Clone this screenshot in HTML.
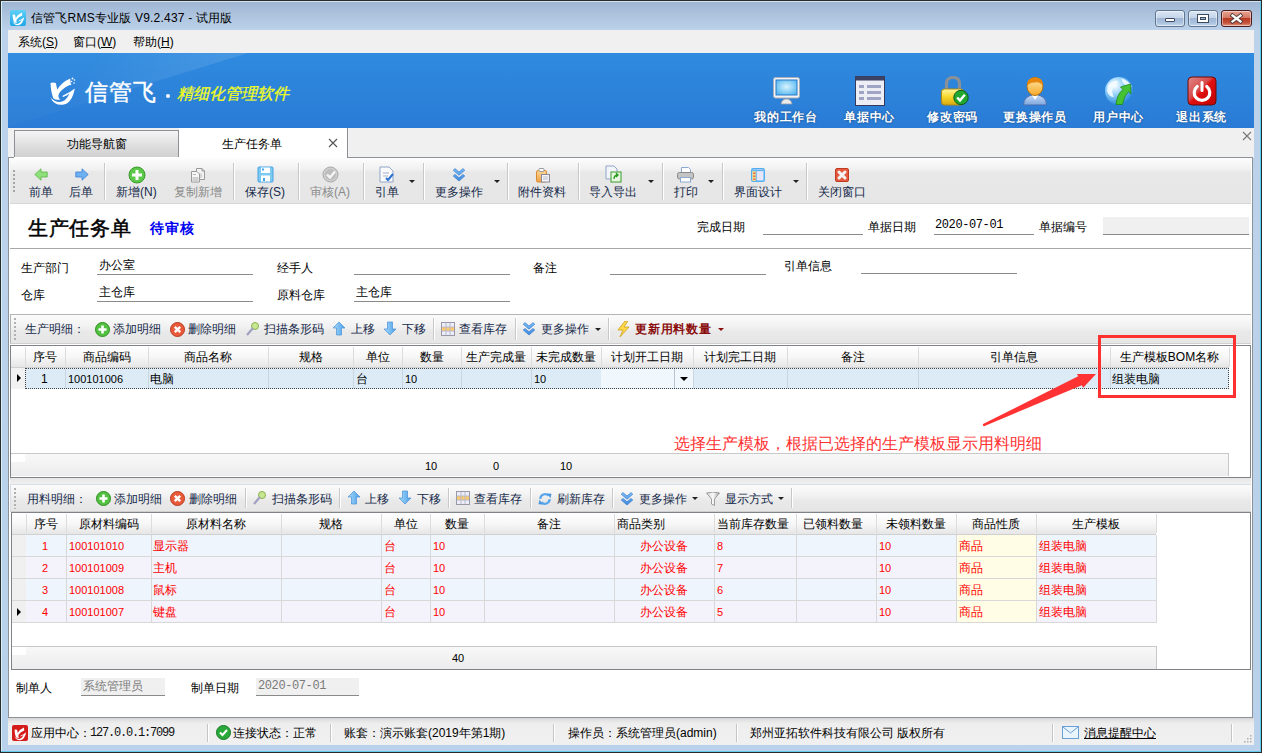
<!DOCTYPE html>
<html><head><meta charset="utf-8"><style>
*{margin:0;padding:0;box-sizing:border-box}
html,body{width:1262px;height:753px;overflow:hidden}
body{position:relative;font-family:"Liberation Sans",sans-serif;font-size:12px;color:#000;
background:linear-gradient(#9db4d2 0px,#bcd2ea 30px,#b9d1ea 100%)}
.a{position:absolute;white-space:nowrap;line-height:12px}
.tb{color:#15294a}
.gr{color:#8a8a8a}
.dd{position:absolute;width:0;height:0;border-left:3px solid transparent;border-right:3px solid transparent;border-top:3px solid #222}
.m{font-family:"Liberation Mono",monospace}
.sep{position:absolute;width:1px;background:#c8c8c8;box-shadow:1px 0 0 #fff}
</style></head><body>
<div class="a" style="left:0px;top:0px;width:1262px;height:753px;border:1px solid #2a2a2a;"></div>
<div class="a" style="left:1px;top:1px;width:1260px;height:751px;border:1px solid #5ccbf0;border-top-color:#d5e3f0;border-left-color:#d4f2fc"></div>
<div class="a" style="left:1px;top:751px;width:1260px;height:1px;background:#63c9ef"></div>
<svg class="a" style="left:10px;top:10px" width="16" height="16"><defs><linearGradient id="tg" x1="0" y1="0" x2="0" y2="1"><stop offset="0" stop-color="#5fd0f6"/><stop offset="1" stop-color="#1ea6e8"/></linearGradient></defs><rect width="16" height="16" rx="2" fill="url(#tg)"/><g transform="translate(-0.6,-0.5) scale(0.48)"><path d="M6.5 11 Q9 10.2 11.8 11 Q12.6 14.5 13.2 17.5 Q18 10 26.2 6.5 L26.8 12.5 Q19 15.5 15 21.5 Q13.2 25.5 16.5 27.5 Q12 28.5 9.5 26.5 Q7 21 6.5 11 Z" fill="#fff"/><path d="M6.3 25.2 Q10 33.5 18.5 32.8 Q28 31.5 30.8 16.4 Q25 21 20 23 Q17.5 24.3 19 25 Q23 23.5 25.5 21.5 Q22 29.5 16 30 Q10 30 6.3 25.2Z" fill="#fff"/></g></svg>
<div class="a" style="left:31px;top:12px;font-size:12px;color:#000;letter-spacing:0.2px">信管飞RMS专业版 V9.2.437 - 试用版</div>
<div class="a" style="left:1155px;top:10px;width:30px;height:17px;background:linear-gradient(#dbe6f3 0,#c4d5ea 45%,#9fb7d5 50%,#abc3df 80%,#c9dcf0 100%);border:1px solid #5f7590;border-radius:3px;box-shadow:inset 0 0 0 1px rgba(255,255,255,.45)"></div>
<div class="a" style="left:1188px;top:10px;width:30px;height:17px;background:linear-gradient(#dbe6f3 0,#c4d5ea 45%,#9fb7d5 50%,#abc3df 80%,#c9dcf0 100%);border:1px solid #5f7590;border-radius:3px;box-shadow:inset 0 0 0 1px rgba(255,255,255,.45)"></div>
<div class="a" style="left:1221px;top:10px;width:31px;height:17px;background:linear-gradient(#e8a493 0,#d47a66 45%,#b93a22 50%,#c5543c 80%,#e09a86 100%);border:1px solid #4b1c1c;border-radius:3px;box-shadow:inset 0 0 0 1px rgba(255,255,255,.45)"></div>
<div class="a" style="left:1165px;top:18px;width:10px;height:4px;background:#fff;border:1px solid #3b4a5c;border-radius:1px"></div>
<div class="a" style="left:1197px;top:14px;width:12px;height:9px;border:1px solid #3b4a5c;background:transparent;box-shadow:inset 0 0 0 2px #fff, inset 0 0 0 3px #3b4a5c"></div>
<svg class="a" style="left:1229px;top:12px" width="16" height="13"><path d="M3.5 3.5 L11.5 9.5 M11.5 3.5 L3.5 9.5" stroke="#4a3838" stroke-width="4" stroke-linecap="square"/><path d="M3.5 3.5 L11.5 9.5 M11.5 3.5 L3.5 9.5" stroke="#fafafa" stroke-width="2.3" stroke-linecap="square"/></svg>
<div class="a" style="left:8px;top:30px;width:1246px;height:23px;background:#f0f0f0"></div>
<div class="a" style="left:18px;top:36px;">系统(<u>S</u>)</div>
<div class="a" style="left:73px;top:36px;">窗口(<u>W</u>)</div>
<div class="a" style="left:133px;top:36px;">帮助(<u>H</u>)</div>
<div class="a" style="left:8px;top:53px;width:1246px;height:75px;overflow:hidden;background:linear-gradient(#2f8bdf,#2a7bd5)"><div style="position:absolute;left:0;top:0;width:260px;height:74px;clip-path:polygon(0 0,240px 0,0 74px);background:linear-gradient(120deg,rgba(255,255,255,0.02) 30%,rgba(255,255,255,0.16) 100%)"></div></div>
<svg class="a" style="left:44px;top:72px" width="40" height="36"><path d="M6.5 11 Q9 10.2 11.8 11 Q12.6 14.5 13.2 17.5 Q18 10 26.2 6.5 L26.8 12.5 Q19 15.5 15 21.5 Q13.2 25.5 16.5 27.5 Q12 28.5 9.5 26.5 Q7 21 6.5 11 Z" fill="#fff"/><path d="M6.3 25.2 Q10 33.5 18.5 32.8 Q28 31.5 30.8 16.4 Q25 21 20 23 Q17.5 24.3 19 25 Q23 23.5 25.5 21.5 Q22 29.5 16 30 Q10 30 6.3 25.2Z" fill="#fff"/><g fill="#fff"><circle cx="28.5" cy="6.5" r="0.9"/><circle cx="30.5" cy="8" r="0.8"/><circle cx="27.5" cy="9.5" r="0.8"/><circle cx="30" cy="11" r="0.8"/><circle cx="26.5" cy="12.5" r="0.8"/></g></svg>
<div class="a" style="left:85px;top:81px;font-size:23px;line-height:23px;color:#fff;font-weight:normal;letter-spacing:1px;-webkit-text-stroke:0.4px #fff">信管飞</div>
<div class="a" style="left:166px;top:94px;width:4px;height:4px;background:#fff;border-radius:2px"></div>
<div class="a" style="left:177px;top:86px;font-size:16px;line-height:16px;color:#f3fd1c;font-style:italic;font-weight:normal;-webkit-text-stroke:0.3px #f3fd1c">精细化管理软件</div>
<div class="a" style="left:754px;top:111px;color:#fff;font-weight:bold;letter-spacing:0.8px;text-shadow:0 0 2px #123d73">我的工作台</div>
<div class="a" style="left:844px;top:111px;color:#fff;font-weight:bold;letter-spacing:0.8px;text-shadow:0 0 2px #123d73">单据中心</div>
<div class="a" style="left:927px;top:111px;color:#fff;font-weight:bold;letter-spacing:0.8px;text-shadow:0 0 2px #123d73">修改密码</div>
<div class="a" style="left:1003px;top:111px;color:#fff;font-weight:bold;letter-spacing:0.8px;text-shadow:0 0 2px #123d73">更换操作员</div>
<div class="a" style="left:1093px;top:111px;color:#fff;font-weight:bold;letter-spacing:0.8px;text-shadow:0 0 2px #123d73">用户中心</div>
<div class="a" style="left:1176px;top:111px;color:#fff;font-weight:bold;letter-spacing:0.8px;text-shadow:0 0 2px #123d73">退出系统</div>
<svg class="a" style="left:773px;top:77px" width="28" height="28"><defs><radialGradient id="scr" cx=".5" cy=".45" r=".6"><stop offset="0" stop-color="#d8f4ff"/><stop offset="1" stop-color="#58b8f0"/></radialGradient></defs><path d="M8 27 Q9 22 13.5 22 Q18 22 19 27Z" fill="#ececec" stroke="#9aa0a8" stroke-width=".8"/><rect x="0.5" y="0.5" width="26" height="20.5" rx="2" fill="#f4f4f4" stroke="#a8aeb6"/><rect x="3" y="3" width="21" height="15" fill="url(#scr)" stroke="#2a78c8"/></svg>
<svg class="a" style="left:855px;top:76px" width="30" height="30"><rect x="0.5" y="0.5" width="29" height="29" fill="#ededf5" stroke="#343a5c"/><rect x="0.5" y="0.5" width="29" height="4" fill="#3b4264"/><g fill="#9fa3c4"><rect x="4" y="9" width="5" height="3"/><rect x="12" y="9" width="14" height="3"/><rect x="4" y="15" width="5" height="3"/><rect x="12" y="15" width="14" height="3"/><rect x="4" y="21" width="5" height="3"/><rect x="12" y="21" width="14" height="3"/></g></svg>
<svg class="a" style="left:941px;top:76px" width="28" height="30"><defs><linearGradient id="lk" x1="0" y1="0" x2="0" y2="1"><stop offset="0" stop-color="#fff7a0"/><stop offset=".5" stop-color="#f6d62a"/><stop offset="1" stop-color="#d8a810"/></linearGradient></defs><path d="M5.5 14 V8 Q5.5 1.5 12 1.5 Q18.5 1.5 18.5 8 V14" fill="none" stroke="#8a9098" stroke-width="3.2"/><rect x="0.5" y="13" width="22" height="16" rx="3" fill="url(#lk)" stroke="#b08a10"/><circle cx="20" cy="21.5" r="7.2" fill="#22a830" stroke="#0c5c16"/><path d="M16.2 21.5 l2.8 3 l4.8 -5.8" stroke="#fff" stroke-width="2.4" fill="none"/></svg>
<svg class="a" style="left:1022px;top:76px" width="26" height="30"><defs><linearGradient id="fc" x1="0" y1="0" x2="0" y2="1"><stop offset="0" stop-color="#ffe8a8"/><stop offset="1" stop-color="#f6a928"/></linearGradient><linearGradient id="bd" x1="0" y1="0" x2="0" y2="1"><stop offset="0" stop-color="#c9ddf6"/><stop offset="1" stop-color="#7ea6de"/></linearGradient></defs><path d="M1.5 29 Q1.5 19.5 13 18.5 Q24.5 19.5 24.5 29Z" fill="url(#bd)" stroke="#4a6eb0"/><path d="M9.5 18.5 L13 24 L16.5 18.5Z" fill="#fff"/><ellipse cx="13" cy="10.5" rx="8" ry="9" fill="url(#fc)" stroke="#b06e12"/><path d="M5 10 Q4.5 1.5 13 1.5 Q21.5 1.5 21 10 Q18 5.5 13 6.5 Q8 6 5 10Z" fill="#e8870e"/></svg>
<svg class="a" style="left:1104px;top:76px" width="30" height="30"><defs><radialGradient id="gl" cx="0.35" cy="0.3" r="0.75"><stop offset="0" stop-color="#ffffff"/><stop offset="0.45" stop-color="#8fd0fa"/><stop offset="1" stop-color="#1f7fd8"/></radialGradient></defs><circle cx="15" cy="15" r="14" fill="url(#gl)"/><path d="M4 9 Q9 4 14 5 Q13 10 9 12 Q7 16 10 21 Q5 21 3 15Z M17 2.5 Q25 4 28 11 Q22 10 19 7Z" fill="#f4fbff" opacity=".9"/><path d="M12 28.5 Q13 18 19 13.5 L16.5 11 L26.5 8 L27 18 L24.5 15.5 Q20 20 18.5 28.5Z" fill="#44c232" stroke="#1f8a1a" stroke-width=".8"/></svg>
<svg class="a" style="left:1187px;top:76px" width="30" height="30"><defs><linearGradient id="pw" x1="0" y1="0" x2="1" y2="1"><stop offset="0" stop-color="#e08a8a"/><stop offset=".42" stop-color="#d84a4a"/><stop offset=".5" stop-color="#e01010"/><stop offset="1" stop-color="#c00000"/></linearGradient></defs><rect x="1" y="1" width="28" height="28" rx="4" fill="url(#pw)" stroke="#6a0a0a"/><path d="M10.2 10.5 A7.8 7.8 0 1 0 19.8 10.5" fill="none" stroke="#fff" stroke-width="3.2" stroke-linecap="round"/><path d="M15 6.5 V14.5" stroke="#fff" stroke-width="3" stroke-linecap="round"/></svg>
<div class="a" style="left:8px;top:128px;width:1246px;height:30px;background:#f0f0f0"></div>
<div class="a" style="left:14px;top:130px;width:165px;height:28px;background:linear-gradient(#f5f5f5,#dcdcdc 60%,#cfcfcf);border:1px solid #8d8f94;border-bottom:none"></div>
<div class="a" style="left:67px;top:138px;">功能导航窗</div>
<div class="a" style="left:179px;top:128px;width:169px;height:30px;background:#fff;border-right:1px solid #8d8f94"></div>
<div class="a" style="left:222px;top:138px;">生产任务单</div>
<svg class="a" style="left:328px;top:138px" width="10" height="10"><path d="M1 1 L9 9 M9 1 L1 9" stroke="#555" stroke-width="1.1"/></svg>
<svg class="a" style="left:1242px;top:131px" width="10" height="10"><path d="M1 1 L9 9 M9 1 L1 9" stroke="#777" stroke-width="1.1"/></svg>
<div class="a" style="left:8px;top:157px;width:1245px;height:561px;background:#fff;border:1px solid #8d9299;border-top:none"></div>
<div class="a" style="left:347px;top:157px;width:906px;height:1px;background:#8d9299"></div>
<div class="a" style="left:8px;top:157px;width:6px;height:1px;background:#8d9299"></div>
<div class="a" style="left:10px;top:158px;width:1241px;height:46px;background:linear-gradient(#fdfdfd 0,#f0f0f0 12px,#e8e8e8 14px,#e6e6e6 100%);border-bottom:1px solid #d6d6d6"></div>
<div class="a" style="left:13px;top:170px;width:2px;height:24px;background:repeating-linear-gradient(#a5a5a5 0 2px,transparent 2px 4px)"></div>
<div class="sep" style="left:104px;top:163px;height:37px"></div>
<div class="sep" style="left:233px;top:163px;height:37px"></div>
<div class="sep" style="left:298px;top:163px;height:37px"></div>
<div class="sep" style="left:363px;top:163px;height:37px"></div>
<div class="sep" style="left:423px;top:163px;height:37px"></div>
<div class="sep" style="left:507px;top:163px;height:37px"></div>
<div class="sep" style="left:578px;top:163px;height:37px"></div>
<div class="sep" style="left:662px;top:163px;height:37px"></div>
<div class="sep" style="left:722px;top:163px;height:37px"></div>
<div class="sep" style="left:806px;top:163px;height:37px"></div>
<div class="a tb" style="left:29px;top:186px">前单</div>
<div class="a tb" style="left:69px;top:186px">后单</div>
<div class="a tb" style="left:116px;top:186px">新增(N)</div>
<div class="a gr" style="left:174px;top:186px">复制新增</div>
<div class="a tb" style="left:245px;top:186px">保存(S)</div>
<div class="a gr" style="left:310px;top:186px">审核(A)</div>
<div class="a tb" style="left:375px;top:186px">引单</div>
<div class="a tb" style="left:435px;top:186px">更多操作</div>
<div class="a tb" style="left:518px;top:186px">附件资料</div>
<div class="a tb" style="left:589px;top:186px">导入导出</div>
<div class="a tb" style="left:674px;top:186px">打印</div>
<div class="a tb" style="left:734px;top:186px">界面设计</div>
<div class="a tb" style="left:818px;top:186px">关闭窗口</div>
<div class="dd" style="left:409px;top:180px"></div>
<div class="dd" style="left:494px;top:180px"></div>
<div class="dd" style="left:648px;top:180px"></div>
<div class="dd" style="left:708px;top:180px"></div>
<div class="dd" style="left:793px;top:180px"></div>
<svg class="a" style="left:34px;top:168px" width="14" height="13"><path d="M0.8 6.5 L7 0.8 V4 H13.2 V9 H7 V12.2Z" fill="#8ee07a" stroke="#5cb548" stroke-width=".8"/></svg>
<svg class="a" style="left:75px;top:168px" width="14" height="13"><path d="M13.2 6.5 L7 0.8 V4 H0.8 V9 H7 V12.2Z" fill="#6cb0f2" stroke="#3d80d4" stroke-width=".8"/></svg>
<svg class="a" style="left:128px;top:166px" width="18" height="18"><circle cx="9" cy="9" r="8" fill="#5cc84a" stroke="#3a9a2c"/><path d="M9 4 V14 M4 9 H14" stroke="#fff" stroke-width="3"/></svg>
<svg class="a" style="left:191px;top:168px" width="15" height="15"><path d="M5.5 0.5 H11 L13.5 3 V11.5 H5.5Z" fill="#f2f2f2" stroke="#9a9a9a"/><path d="M11 0.5 V3 H13.5" fill="none" stroke="#9a9a9a"/><path d="M0.5 3.5 H6 L8.5 6 V14 H0.5Z" fill="#f6f6f6" stroke="#9a9a9a"/><rect x="1.5" y="9" width="6" height="4" fill="#d0d0d0"/><path d="M2 6.5 H5 M10 5.5 V10" stroke="#b8b8b8"/></svg>
<svg class="a" style="left:257px;top:166px" width="17" height="17"><rect x="1" y="1" width="15" height="15" rx="1" fill="#7ccaf4" stroke="#49a3e4"/><rect x="4" y="1.5" width="9" height="5.5" fill="#fff"/><rect x="5" y="2.5" width="2" height="2" fill="#49a3e4"/><rect x="4" y="9.5" width="9" height="6" fill="#fff"/><rect x="6" y="12" width="2" height="3" fill="#49a3e4"/></svg>
<svg class="a" style="left:322px;top:166px" width="17" height="17"><circle cx="8.5" cy="8.5" r="7.5" fill="#cfcfcf" stroke="#a9a9a9"/><circle cx="8.5" cy="8.5" r="5.5" fill="#bdbdbd"/><path d="M5 8.5 l3 3 l5 -6" stroke="#f6f6f6" stroke-width="2.4" fill="none"/></svg>
<svg class="a" style="left:379px;top:166px" width="16" height="17"><path d="M1 1 H10 L14 5 V16 H1Z" fill="#fafafa" stroke="#8fa6c8"/><path d="M4 7 H10 M4 10 H9" stroke="#a0b0d0"/><path d="M7 12 l2 2 l5 -6" stroke="#2a70d0" stroke-width="2" fill="none"/></svg>
<svg class="a" style="left:452px;top:168px" width="14" height="14"><defs><linearGradient id="gm2" x1="0" y1="0" x2="0" y2="1"><stop offset="0" stop-color="#7cc0f8"/><stop offset="1" stop-color="#3a8ae0"/></linearGradient></defs><path d="M1.2 2.2 L3 0.6 L7 4 L11 0.6 L12.8 2.2 L7 7.2Z M1.2 8 L3 6.4 L7 9.8 L11 6.4 L12.8 8 L7 13Z" fill="url(#gm2)" stroke="#2f6fc8" stroke-width=".6"/></svg>
<svg class="a" style="left:536px;top:168px" width="15" height="15"><defs><linearGradient id="ga" x1="0" y1="0" x2="0" y2="1"><stop offset="0" stop-color="#fcd79a"/><stop offset="1" stop-color="#f0a040"/></linearGradient></defs><rect x="0.5" y="2.5" width="10" height="11.5" rx="1.5" fill="url(#ga)" stroke="#d88a30"/><rect x="3" y="0.5" width="5" height="3" rx="1" fill="#fff" stroke="#999"/><rect x="5.5" y="6.5" width="8" height="7.5" fill="#f4f4f8" stroke="#8a8a9a"/><path d="M7 9 H12 M7 11 H12" stroke="#b0b0c0" stroke-width=".8"/></svg>
<svg class="a" style="left:605px;top:165px" width="18" height="18"><path d="M1 1 H9 L12 4 V14 H1Z" fill="#f2f4fa" stroke="#8fa6c8"/><rect x="6" y="7" width="10" height="10" fill="#e8f8e0" stroke="#3a9a2c"/><path d="M9 14 Q9 10 13 10 M11 8 l2 2 l-2 2" stroke="#2a9a20" stroke-width="1.4" fill="none"/></svg>
<svg class="a" style="left:677px;top:167px" width="18" height="16"><path d="M4.5 0.5 H11.5 L13.5 2.5 V6 H4.5Z" fill="#fff" stroke="#8aa8d0"/><rect x="0.5" y="5.5" width="16" height="6.5" rx="2" fill="#c4c4c4" stroke="#8a8a8a"/><rect x="3.5" y="10.5" width="10" height="4.5" fill="#fff" stroke="#8aa8d0"/></svg>
<svg class="a" style="left:751px;top:168px" width="14" height="14"><rect x="0.75" y="0.75" width="12.5" height="12.5" rx="1.5" fill="#e6e6fa" stroke="#52aef0" stroke-width="1.5"/><rect x="1.5" y="3" width="3.5" height="10" fill="#f8e080"/><path d="M1.5 2.6 H12.5" stroke="#52aef0"/><path d="M5.2 3 V13" stroke="#52aef0"/><g fill="#f06040"><rect x="2.3" y="4.5" width="2" height="1.5"/><rect x="2.3" y="7.5" width="2" height="1.5"/><rect x="2.3" y="10.5" width="2" height="1.5"/></g></svg>
<svg class="a" style="left:835px;top:168px" width="14" height="14"><rect x="0.5" y="0.5" width="13" height="13" rx="1.5" fill="#e45a3c" stroke="#c03a22"/><path d="M4 4 L10 10 M10 4 L4 10" stroke="#f4f4f4" stroke-width="3" stroke-linecap="round"/></svg>
<div class="a" style="left:28px;top:218px;font-family:'Liberation Serif',serif;font-size:20px;line-height:20px;font-weight:normal;letter-spacing:0.7px;-webkit-text-stroke:0.5px #000">生产任务单</div>
<div class="a" style="left:150px;top:221px;font-size:14px;line-height:14px;font-weight:bold;letter-spacing:0.8px;color:#0000f0">待审核</div>
<div class="a" style="left:697px;top:221px;">完成日期</div>
<div class="a" style="left:763px;top:234px;width:100px;height:1px;background:#8a8a8a"></div>
<div class="a" style="left:868px;top:221px;">单据日期</div>
<div class="a" style="left:935px;top:219px;font-family:'Liberation Mono',monospace;font-size:12px;letter-spacing:-0.4px">2020-07-01</div>
<div class="a" style="left:934px;top:234px;width:100px;height:1px;background:#8a8a8a"></div>
<div class="a" style="left:1039px;top:221px;">单据编号</div>
<div class="a" style="left:1103px;top:217px;width:146px;height:18px;background:#f0f0f0;border-bottom:1px solid #8a8a8a"></div>
<div class="a" style="left:10px;top:248px;width:1241px;height:1px;background:#a8a8a8"></div>
<div class="a" style="left:21px;top:262px;">生产部门</div>
<div class="a" style="left:99px;top:259px;">办公室</div>
<div class="a" style="left:97px;top:274px;width:156px;height:1px;background:#8a8a8a"></div>
<div class="a" style="left:277px;top:262px;">经手人</div>
<div class="a" style="left:354px;top:274px;width:156px;height:1px;background:#8a8a8a"></div>
<div class="a" style="left:533px;top:262px;">备注</div>
<div class="a" style="left:610px;top:274px;width:156px;height:1px;background:#8a8a8a"></div>
<div class="a" style="left:784px;top:260px;">引单信息</div>
<div class="a" style="left:861px;top:273px;width:156px;height:1px;background:#8a8a8a"></div>
<div class="a" style="left:21px;top:289px;">仓库</div>
<div class="a" style="left:99px;top:286px;">主仓库</div>
<div class="a" style="left:97px;top:301px;width:156px;height:1px;background:#8a8a8a"></div>
<div class="a" style="left:277px;top:289px;">原料仓库</div>
<div class="a" style="left:356px;top:286px;">主仓库</div>
<div class="a" style="left:354px;top:301px;width:156px;height:1px;background:#8a8a8a"></div>
<div class="a" style="left:10px;top:314px;width:1241px;height:30px;background:linear-gradient(#fbfbfb 0,#f2f2f2 40%,#e9e9e9 60%,#e6e6e6 100%);border-top:1px solid #b4b4b4;border-left:1px solid #b4b4b4;border-bottom:1px solid #cfcfcf"></div>
<div class="a" style="left:14px;top:318px;width:2px;height:23px;background:repeating-linear-gradient(#b0b0b0 0 2px,transparent 2px 4px)"></div>
<div class="sep" style="left:433px;top:318px;height:22px"></div>
<div class="sep" style="left:515px;top:318px;height:22px"></div>
<div class="sep" style="left:608px;top:318px;height:22px"></div>
<div class="a tb" style="left:25px;top:323px;">生产明细：</div>
<div class="a tb" style="left:113px;top:323px;">添加明细</div>
<div class="a tb" style="left:188px;top:323px;">删除明细</div>
<div class="a tb" style="left:264px;top:323px;">扫描条形码</div>
<div class="a tb" style="left:351px;top:323px;">上移</div>
<div class="a tb" style="left:402px;top:323px;">下移</div>
<div class="a tb" style="left:459px;top:323px;">查看库存</div>
<div class="a tb" style="left:541px;top:323px;">更多操作</div>
<div class="a tb" style="left:635px;top:323px;color:#8b0e0e;font-weight:bold;letter-spacing:0.8px">更新用料数量</div>
<svg class="a" style="left:95px;top:322px" width="15" height="15"><circle cx="7.5" cy="7.5" r="7" fill="#52c040" stroke="#2f8f22"/><path d="M7.5 3.5 V11.5 M3.5 7.5 H11.5" stroke="#fff" stroke-width="2.6"/></svg>
<svg class="a" style="left:170px;top:322px" width="15" height="15"><circle cx="7.5" cy="7.5" r="7" fill="#e85a3a" stroke="#b83a20"/><path d="M4.8 4.8 L10.2 10.2 M10.2 4.8 L4.8 10.2" stroke="#fff" stroke-width="2.4"/></svg>
<svg class="a" style="left:245px;top:321px" width="15" height="16"><circle cx="10" cy="5" r="3.5" fill="#c8e890" stroke="#8ab050"/><path d="M8 7 L2 14" stroke="#a0a0c0" stroke-width="2.2"/></svg>
<svg class="a" style="left:332px;top:321px" width="14" height="15"><defs><linearGradient id="gu" x1="0" x2="1"><stop offset="0" stop-color="#a8dcfc"/><stop offset="1" stop-color="#4a9ee8"/></linearGradient></defs><path d="M7 1 L13 7 H9.5 V14 H4.5 V7 H1Z" fill="url(#gu)" stroke="#4a90d8" stroke-width=".7"/></svg>
<svg class="a" style="left:383px;top:321px" width="14" height="15"><path d="M7 14 L13 8 H9.5 V1 H4.5 V8 H1Z" fill="url(#gu)" stroke="#4a90d8" stroke-width=".7"/></svg>
<svg class="a" style="left:441px;top:322px" width="14" height="14"><rect x=".5" y=".5" width="13" height="13" fill="#ececfa" stroke="#9a9aa6"/><rect x="1" y="5" width="12" height="4" fill="#fcc870"/><path d="M5 1 V13 M9 1 V13 M1 5 H13 M1 9 H13" stroke="#b4b8c8" stroke-width=".9"/></svg>
<svg class="a" style="left:522px;top:322px" width="14" height="14"><defs><linearGradient id="gm" x1="0" y1="0" x2="0" y2="1"><stop offset="0" stop-color="#7cc0f8"/><stop offset="1" stop-color="#3a8ae0"/></linearGradient></defs><path d="M1.2 2.2 L3 0.6 L7 4 L11 0.6 L12.8 2.2 L7 7.2Z M1.2 8 L3 6.4 L7 9.8 L11 6.4 L12.8 8 L7 13Z" fill="url(#gm)" stroke="#2f6fc8" stroke-width=".6"/></svg>
<svg class="a" style="left:616px;top:321px" width="14" height="16"><path d="M9 0 L2 9 H7 L4 16 L13 6 H8 L12 0Z" fill="#ffd84a" stroke="#d0a020" stroke-width=".8"/></svg>
<div class="dd" style="left:595px;top:328px"></div>
<div class="dd" style="left:718px;top:328px;border-top-color:#8b0e0e"></div>
<div class="a" style="left:10px;top:345px;width:1241px;height:133px;background:#fff;border:1px solid #7f8388"></div>
<div class="a" style="left:11px;top:346px;width:1218px;height:22px;background:linear-gradient(#ffffff 0,#f7f7f7 50%,#ededed 80%,#e6e6e6 100%);border-bottom:1px solid #d0d0d0"></div>
<div class="a" style="left:25px;top:347px;width:1px;height:20px;background:#dcdcdc"></div>
<div class="a" style="left:65px;top:347px;width:1px;height:20px;background:#dcdcdc"></div>
<div class="a" style="left:25px;top:351px;width:40px;text-align:center">序号</div>
<div class="a" style="left:148px;top:347px;width:1px;height:20px;background:#dcdcdc"></div>
<div class="a" style="left:65px;top:351px;width:83px;text-align:center">商品编码</div>
<div class="a" style="left:268px;top:347px;width:1px;height:20px;background:#dcdcdc"></div>
<div class="a" style="left:148px;top:351px;width:120px;text-align:center">商品名称</div>
<div class="a" style="left:353px;top:347px;width:1px;height:20px;background:#dcdcdc"></div>
<div class="a" style="left:268px;top:351px;width:85px;text-align:center">规格</div>
<div class="a" style="left:402px;top:347px;width:1px;height:20px;background:#dcdcdc"></div>
<div class="a" style="left:353px;top:351px;width:49px;text-align:center">单位</div>
<div class="a" style="left:461px;top:347px;width:1px;height:20px;background:#dcdcdc"></div>
<div class="a" style="left:402px;top:351px;width:59px;text-align:center">数量</div>
<div class="a" style="left:531px;top:347px;width:1px;height:20px;background:#dcdcdc"></div>
<div class="a" style="left:461px;top:351px;width:70px;text-align:center">生产完成量</div>
<div class="a" style="left:601px;top:347px;width:1px;height:20px;background:#dcdcdc"></div>
<div class="a" style="left:531px;top:351px;width:70px;text-align:center">未完成数量</div>
<div class="a" style="left:693px;top:347px;width:1px;height:20px;background:#dcdcdc"></div>
<div class="a" style="left:601px;top:351px;width:92px;text-align:center">计划开工日期</div>
<div class="a" style="left:787px;top:347px;width:1px;height:20px;background:#dcdcdc"></div>
<div class="a" style="left:693px;top:351px;width:94px;text-align:center">计划完工日期</div>
<div class="a" style="left:918px;top:347px;width:1px;height:20px;background:#dcdcdc"></div>
<div class="a" style="left:787px;top:351px;width:131px;text-align:center">备注</div>
<div class="a" style="left:1110px;top:347px;width:1px;height:20px;background:#dcdcdc"></div>
<div class="a" style="left:918px;top:351px;width:192px;text-align:center">引单信息</div>
<div class="a" style="left:1229px;top:347px;width:1px;height:20px;background:#dcdcdc"></div>
<div class="a" style="left:1110px;top:351px;width:119px;text-align:center">生产模板BOM名称</div>
<div class="a" style="left:25px;top:368px;width:1204px;height:21px;background:#dcebf6;border:1px dotted #444"></div>
<div class="a" style="left:11px;top:368px;width:14px;height:21px;background:#f2f2f2"></div>
<div class="a" style="left:17px;top:374px;width:0;height:0;border-top:4px solid transparent;border-bottom:4px solid transparent;border-left:4px solid #000"></div>
<div class="a" style="left:65px;top:369px;width:1px;height:19px;background:#c9d6e0"></div>
<div class="a" style="left:148px;top:369px;width:1px;height:19px;background:#c9d6e0"></div>
<div class="a" style="left:268px;top:369px;width:1px;height:19px;background:#c9d6e0"></div>
<div class="a" style="left:353px;top:369px;width:1px;height:19px;background:#c9d6e0"></div>
<div class="a" style="left:402px;top:369px;width:1px;height:19px;background:#c9d6e0"></div>
<div class="a" style="left:461px;top:369px;width:1px;height:19px;background:#c9d6e0"></div>
<div class="a" style="left:531px;top:369px;width:1px;height:19px;background:#c9d6e0"></div>
<div class="a" style="left:601px;top:369px;width:1px;height:19px;background:#c9d6e0"></div>
<div class="a" style="left:693px;top:369px;width:1px;height:19px;background:#c9d6e0"></div>
<div class="a" style="left:787px;top:369px;width:1px;height:19px;background:#c9d6e0"></div>
<div class="a" style="left:918px;top:369px;width:1px;height:19px;background:#c9d6e0"></div>
<div class="a" style="left:1110px;top:369px;width:1px;height:19px;background:#c9d6e0"></div>
<div class="a" style="left:601px;top:369px;width:92px;height:19px;background:#f0f7fd"></div>
<div class="a" style="left:674px;top:369px;width:1px;height:19px;background:#b8c4d0"></div>
<div class="dd" style="left:680px;top:377px;border-left-width:4px;border-right-width:4px;border-top-width:4px;border-top-color:#000"></div>
<div class="a" style="left:41px;top:373px;">1</div>
<div class="a" style="left:68px;top:373px;font-size:11px">100101006</div>
<div class="a" style="left:150px;top:373px;">电脑</div>
<div class="a" style="left:356px;top:373px;">台</div>
<div class="a" style="left:405px;top:373px;font-size:11px">10</div>
<div class="a" style="left:534px;top:373px;font-size:11px">10</div>
<div class="a" style="left:1112px;top:373px;">组装电脑</div>
<div class="a" style="left:11px;top:453px;width:1218px;height:23px;background:linear-gradient(#f8f8f8,#ececec);border-top:1px solid #c8c8c8;border-right:1px solid #c8c8c8"></div>
<div class="a" style="left:11px;top:454px;width:14px;height:8px;background:#fff"></div>
<div class="a" style="left:425px;top:460px;font-size:11px">10</div>
<div class="a" style="left:493px;top:460px;font-size:11px">0</div>
<div class="a" style="left:560px;top:460px;font-size:11px">10</div>
<div class="a" style="left:674px;top:436px;font-size:16px;line-height:16px;color:#ff3333">选择生产模板，根据已选择的生产模板显示用料明细</div>
<div class="a" style="left:1098px;top:335px;width:138px;height:63px;border:3px solid #ff3030"></div>
<svg class="a" style="left:0;top:0" width="1262" height="753"><path d="M983 424 L1078.2 376.2 L1077 374 L1096 374 L1083.2 387.7 L1081.8 385.2 L984 426.3 Q982.5 425.5 983 424Z" fill="#ff3333"/></svg>
<div class="a" style="left:10px;top:478px;width:1241px;height:6px;background:linear-gradient(#e6e6e6,#f0f0f0)"></div>
<div class="a" style="left:10px;top:484px;width:1241px;height:28px;background:linear-gradient(#fbfbfb 0,#f2f2f2 40%,#e9e9e9 60%,#e6e6e6 100%);border-top:1px solid #d6dee6;border-left:1px solid #d6dee6;border-bottom:1px solid #cfcfcf"></div>
<div class="a" style="left:14px;top:488px;width:2px;height:21px;background:repeating-linear-gradient(#b0b0b0 0 2px,transparent 2px 4px)"></div>
<div class="sep" style="left:245px;top:488px;height:20px"></div>
<div class="sep" style="left:339px;top:488px;height:20px"></div>
<div class="sep" style="left:448px;top:488px;height:20px"></div>
<div class="sep" style="left:530px;top:488px;height:20px"></div>
<div class="sep" style="left:612px;top:488px;height:20px"></div>
<div class="sep" style="left:791px;top:488px;height:20px"></div>
<div class="a tb" style="left:27px;top:493px;">用料明细：</div>
<div class="a tb" style="left:114px;top:493px;">添加明细</div>
<div class="a tb" style="left:189px;top:493px;">删除明细</div>
<div class="a tb" style="left:272px;top:493px;">扫描条形码</div>
<div class="a tb" style="left:365px;top:493px;">上移</div>
<div class="a tb" style="left:417px;top:493px;">下移</div>
<div class="a tb" style="left:474px;top:493px;">查看库存</div>
<div class="a tb" style="left:557px;top:493px;">刷新库存</div>
<div class="a tb" style="left:639px;top:493px;">更多操作</div>
<div class="a tb" style="left:725px;top:493px;">显示方式</div>
<svg class="a" style="left:96px;top:491px" width="15" height="15"><circle cx="7.5" cy="7.5" r="7" fill="#52c040" stroke="#2f8f22"/><path d="M7.5 3.5 V11.5 M3.5 7.5 H11.5" stroke="#fff" stroke-width="2.6"/></svg>
<svg class="a" style="left:170px;top:491px" width="15" height="15"><circle cx="7.5" cy="7.5" r="7" fill="#e85a3a" stroke="#b83a20"/><path d="M4.8 4.8 L10.2 10.2 M10.2 4.8 L4.8 10.2" stroke="#fff" stroke-width="2.4"/></svg>
<svg class="a" style="left:252px;top:490px" width="15" height="16"><circle cx="10" cy="5" r="3.5" fill="#c8e890" stroke="#8ab050"/><path d="M8 7 L2 14" stroke="#a0a0c0" stroke-width="2.2"/></svg>
<svg class="a" style="left:347px;top:490px" width="14" height="15"><defs><linearGradient id="gu" x1="0" x2="1"><stop offset="0" stop-color="#a8dcfc"/><stop offset="1" stop-color="#4a9ee8"/></linearGradient></defs><path d="M7 1 L13 7 H9.5 V14 H4.5 V7 H1Z" fill="url(#gu)" stroke="#4a90d8" stroke-width=".7"/></svg>
<svg class="a" style="left:398px;top:490px" width="14" height="15"><path d="M7 14 L13 8 H9.5 V1 H4.5 V8 H1Z" fill="url(#gu)" stroke="#4a90d8" stroke-width=".7"/></svg>
<svg class="a" style="left:456px;top:491px" width="14" height="14"><rect x=".5" y=".5" width="13" height="13" fill="#ececfa" stroke="#9a9aa6"/><rect x="1" y="5" width="12" height="4" fill="#fcc870"/><path d="M5 1 V13 M9 1 V13 M1 5 H13 M1 9 H13" stroke="#b4b8c8" stroke-width=".9"/></svg>
<svg class="a" style="left:538px;top:492px" width="14" height="14"><g fill="none" stroke="#5aa6ec" stroke-width="2.2"><path d="M2.2 6.8 A5 5 0 0 1 10.6 3.6"/><path d="M11.8 7.2 A5 5 0 0 1 3.4 10.4"/></g><path d="M9 1.5 L13.5 1.8 L12.5 6.2Z M5 12.5 L0.5 12.2 L1.5 7.8Z" fill="#4a96e0"/></svg>
<svg class="a" style="left:620px;top:492px" width="14" height="14"><defs><linearGradient id="gm" x1="0" y1="0" x2="0" y2="1"><stop offset="0" stop-color="#7cc0f8"/><stop offset="1" stop-color="#3a8ae0"/></linearGradient></defs><path d="M1.2 2.2 L3 0.6 L7 4 L11 0.6 L12.8 2.2 L7 7.2Z M1.2 8 L3 6.4 L7 9.8 L11 6.4 L12.8 8 L7 13Z" fill="url(#gm)" stroke="#2f6fc8" stroke-width=".6"/></svg>
<svg class="a" style="left:706px;top:492px" width="14" height="14"><defs><linearGradient id="gf" x1="0" y1="0" x2="1" y2="0"><stop offset="0" stop-color="#d0d0d0"/><stop offset=".5" stop-color="#fafafa"/><stop offset="1" stop-color="#a8a8a8"/></linearGradient></defs><path d="M0.5 1 Q7 -1 13.5 1 L8.5 7 V13.5 L5.5 12 V7Z" fill="url(#gf)" stroke="#8a8a8a" stroke-width=".8"/></svg>
<div class="dd" style="left:692px;top:497px"></div>
<div class="dd" style="left:778px;top:497px"></div>
<div class="a" style="left:11px;top:512px;width:1240px;height:158px;background:#fff;border:1px solid #7f8388"></div>
<div class="a" style="left:12px;top:513px;width:1144px;height:22px;background:linear-gradient(#ffffff 0,#f7f7f7 50%,#ededed 80%,#e6e6e6 100%);border-bottom:1px solid #d0d0d0"></div>
<div class="a" style="left:26px;top:514px;width:1px;height:19px;background:#dcdcdc"></div>
<div class="a" style="left:66px;top:514px;width:1px;height:19px;background:#dcdcdc"></div>
<div class="a" style="left:26px;top:518px;width:40px;text-align:center">序号</div>
<div class="a" style="left:151px;top:514px;width:1px;height:19px;background:#dcdcdc"></div>
<div class="a" style="left:66px;top:518px;width:85px;text-align:center">原材料编码</div>
<div class="a" style="left:281px;top:514px;width:1px;height:19px;background:#dcdcdc"></div>
<div class="a" style="left:151px;top:518px;width:130px;text-align:center">原材料名称</div>
<div class="a" style="left:381px;top:514px;width:1px;height:19px;background:#dcdcdc"></div>
<div class="a" style="left:281px;top:518px;width:100px;text-align:center">规格</div>
<div class="a" style="left:430px;top:514px;width:1px;height:19px;background:#dcdcdc"></div>
<div class="a" style="left:381px;top:518px;width:49px;text-align:center">单位</div>
<div class="a" style="left:484px;top:514px;width:1px;height:19px;background:#dcdcdc"></div>
<div class="a" style="left:430px;top:518px;width:54px;text-align:center">数量</div>
<div class="a" style="left:614px;top:514px;width:1px;height:19px;background:#dcdcdc"></div>
<div class="a" style="left:484px;top:518px;width:130px;text-align:center">备注</div>
<div class="a" style="left:714px;top:514px;width:1px;height:19px;background:#dcdcdc"></div>
<div class="a" style="left:617px;top:518px">商品类别</div>
<div class="a" style="left:796px;top:514px;width:1px;height:19px;background:#dcdcdc"></div>
<div class="a" style="left:717px;top:518px">当前库存数量</div>
<div class="a" style="left:876px;top:514px;width:1px;height:19px;background:#dcdcdc"></div>
<div class="a" style="left:803px;top:518px">已领料数量</div>
<div class="a" style="left:956px;top:514px;width:1px;height:19px;background:#dcdcdc"></div>
<div class="a" style="left:876px;top:518px;width:80px;text-align:center">未领料数量</div>
<div class="a" style="left:1036px;top:514px;width:1px;height:19px;background:#dcdcdc"></div>
<div class="a" style="left:956px;top:518px;width:80px;text-align:center">商品性质</div>
<div class="a" style="left:1156px;top:514px;width:1px;height:19px;background:#dcdcdc"></div>
<div class="a" style="left:1036px;top:518px;width:120px;text-align:center">生产模板</div>
<div class="a" style="left:12px;top:535px;width:1144px;height:22px;background:#eef5fd;border-bottom:1px solid #d8d8d8"></div>
<div class="a" style="left:12px;top:535px;width:14px;height:22px;background:#f0f0f0;border-bottom:1px solid #d8d8d8"></div>
<div class="a" style="left:956px;top:535px;width:80px;height:22px;background:#fffde6;border-bottom:1px solid #d8d8d8"></div>
<div class="a" style="left:66px;top:535px;width:1px;height:22px;background:#d8d8d8"></div>
<div class="a" style="left:151px;top:535px;width:1px;height:22px;background:#d8d8d8"></div>
<div class="a" style="left:281px;top:535px;width:1px;height:22px;background:#d8d8d8"></div>
<div class="a" style="left:381px;top:535px;width:1px;height:22px;background:#d8d8d8"></div>
<div class="a" style="left:430px;top:535px;width:1px;height:22px;background:#d8d8d8"></div>
<div class="a" style="left:484px;top:535px;width:1px;height:22px;background:#d8d8d8"></div>
<div class="a" style="left:614px;top:535px;width:1px;height:22px;background:#d8d8d8"></div>
<div class="a" style="left:714px;top:535px;width:1px;height:22px;background:#d8d8d8"></div>
<div class="a" style="left:796px;top:535px;width:1px;height:22px;background:#d8d8d8"></div>
<div class="a" style="left:876px;top:535px;width:1px;height:22px;background:#d8d8d8"></div>
<div class="a" style="left:956px;top:535px;width:1px;height:22px;background:#d8d8d8"></div>
<div class="a" style="left:1036px;top:535px;width:1px;height:22px;background:#d8d8d8"></div>
<div class="a" style="left:1156px;top:535px;width:1px;height:22px;background:#d8d8d8"></div>
<div class="a" style="left:42px;top:540px;color:#ff0000;font-size:11px">1</div>
<div class="a" style="left:69px;top:540px;color:#ff0000;font-size:11px">100101010</div>
<div class="a" style="left:153px;top:540px;color:#ff0000">显示器</div>
<div class="a" style="left:384px;top:540px;color:#ff0000">台</div>
<div class="a" style="left:433px;top:540px;color:#ff0000;font-size:11px">10</div>
<div class="a" style="left:640px;top:540px;color:#ff0000">办公设备</div>
<div class="a" style="left:717px;top:540px;color:#ff0000;font-size:11px">8</div>
<div class="a" style="left:879px;top:540px;color:#ff0000;font-size:11px">10</div>
<div class="a" style="left:959px;top:540px;color:#ff0000">商品</div>
<div class="a" style="left:1039px;top:540px;color:#ff0000">组装电脑</div>
<div class="a" style="left:12px;top:557px;width:1144px;height:22px;background:#f4f2fb;border-bottom:1px solid #d8d8d8"></div>
<div class="a" style="left:12px;top:557px;width:14px;height:22px;background:#f0f0f0;border-bottom:1px solid #d8d8d8"></div>
<div class="a" style="left:956px;top:557px;width:80px;height:22px;background:#fffde6;border-bottom:1px solid #d8d8d8"></div>
<div class="a" style="left:66px;top:557px;width:1px;height:22px;background:#d8d8d8"></div>
<div class="a" style="left:151px;top:557px;width:1px;height:22px;background:#d8d8d8"></div>
<div class="a" style="left:281px;top:557px;width:1px;height:22px;background:#d8d8d8"></div>
<div class="a" style="left:381px;top:557px;width:1px;height:22px;background:#d8d8d8"></div>
<div class="a" style="left:430px;top:557px;width:1px;height:22px;background:#d8d8d8"></div>
<div class="a" style="left:484px;top:557px;width:1px;height:22px;background:#d8d8d8"></div>
<div class="a" style="left:614px;top:557px;width:1px;height:22px;background:#d8d8d8"></div>
<div class="a" style="left:714px;top:557px;width:1px;height:22px;background:#d8d8d8"></div>
<div class="a" style="left:796px;top:557px;width:1px;height:22px;background:#d8d8d8"></div>
<div class="a" style="left:876px;top:557px;width:1px;height:22px;background:#d8d8d8"></div>
<div class="a" style="left:956px;top:557px;width:1px;height:22px;background:#d8d8d8"></div>
<div class="a" style="left:1036px;top:557px;width:1px;height:22px;background:#d8d8d8"></div>
<div class="a" style="left:1156px;top:557px;width:1px;height:22px;background:#d8d8d8"></div>
<div class="a" style="left:42px;top:562px;color:#ff0000;font-size:11px">2</div>
<div class="a" style="left:69px;top:562px;color:#ff0000;font-size:11px">100101009</div>
<div class="a" style="left:153px;top:562px;color:#ff0000">主机</div>
<div class="a" style="left:384px;top:562px;color:#ff0000">台</div>
<div class="a" style="left:433px;top:562px;color:#ff0000;font-size:11px">10</div>
<div class="a" style="left:640px;top:562px;color:#ff0000">办公设备</div>
<div class="a" style="left:717px;top:562px;color:#ff0000;font-size:11px">7</div>
<div class="a" style="left:879px;top:562px;color:#ff0000;font-size:11px">10</div>
<div class="a" style="left:959px;top:562px;color:#ff0000">商品</div>
<div class="a" style="left:1039px;top:562px;color:#ff0000">组装电脑</div>
<div class="a" style="left:12px;top:579px;width:1144px;height:22px;background:#eef5fd;border-bottom:1px solid #d8d8d8"></div>
<div class="a" style="left:12px;top:579px;width:14px;height:22px;background:#f0f0f0;border-bottom:1px solid #d8d8d8"></div>
<div class="a" style="left:956px;top:579px;width:80px;height:22px;background:#fffde6;border-bottom:1px solid #d8d8d8"></div>
<div class="a" style="left:66px;top:579px;width:1px;height:22px;background:#d8d8d8"></div>
<div class="a" style="left:151px;top:579px;width:1px;height:22px;background:#d8d8d8"></div>
<div class="a" style="left:281px;top:579px;width:1px;height:22px;background:#d8d8d8"></div>
<div class="a" style="left:381px;top:579px;width:1px;height:22px;background:#d8d8d8"></div>
<div class="a" style="left:430px;top:579px;width:1px;height:22px;background:#d8d8d8"></div>
<div class="a" style="left:484px;top:579px;width:1px;height:22px;background:#d8d8d8"></div>
<div class="a" style="left:614px;top:579px;width:1px;height:22px;background:#d8d8d8"></div>
<div class="a" style="left:714px;top:579px;width:1px;height:22px;background:#d8d8d8"></div>
<div class="a" style="left:796px;top:579px;width:1px;height:22px;background:#d8d8d8"></div>
<div class="a" style="left:876px;top:579px;width:1px;height:22px;background:#d8d8d8"></div>
<div class="a" style="left:956px;top:579px;width:1px;height:22px;background:#d8d8d8"></div>
<div class="a" style="left:1036px;top:579px;width:1px;height:22px;background:#d8d8d8"></div>
<div class="a" style="left:1156px;top:579px;width:1px;height:22px;background:#d8d8d8"></div>
<div class="a" style="left:42px;top:584px;color:#ff0000;font-size:11px">3</div>
<div class="a" style="left:69px;top:584px;color:#ff0000;font-size:11px">100101008</div>
<div class="a" style="left:153px;top:584px;color:#ff0000">鼠标</div>
<div class="a" style="left:384px;top:584px;color:#ff0000">台</div>
<div class="a" style="left:433px;top:584px;color:#ff0000;font-size:11px">10</div>
<div class="a" style="left:640px;top:584px;color:#ff0000">办公设备</div>
<div class="a" style="left:717px;top:584px;color:#ff0000;font-size:11px">6</div>
<div class="a" style="left:879px;top:584px;color:#ff0000;font-size:11px">10</div>
<div class="a" style="left:959px;top:584px;color:#ff0000">商品</div>
<div class="a" style="left:1039px;top:584px;color:#ff0000">组装电脑</div>
<div class="a" style="left:12px;top:601px;width:1144px;height:22px;background:#f4f2fb;border-bottom:1px solid #d8d8d8"></div>
<div class="a" style="left:12px;top:601px;width:14px;height:22px;background:#f0f0f0;border-bottom:1px solid #d8d8d8"></div>
<div class="a" style="left:956px;top:601px;width:80px;height:22px;background:#fffde6;border-bottom:1px solid #d8d8d8"></div>
<div class="a" style="left:66px;top:601px;width:1px;height:22px;background:#d8d8d8"></div>
<div class="a" style="left:151px;top:601px;width:1px;height:22px;background:#d8d8d8"></div>
<div class="a" style="left:281px;top:601px;width:1px;height:22px;background:#d8d8d8"></div>
<div class="a" style="left:381px;top:601px;width:1px;height:22px;background:#d8d8d8"></div>
<div class="a" style="left:430px;top:601px;width:1px;height:22px;background:#d8d8d8"></div>
<div class="a" style="left:484px;top:601px;width:1px;height:22px;background:#d8d8d8"></div>
<div class="a" style="left:614px;top:601px;width:1px;height:22px;background:#d8d8d8"></div>
<div class="a" style="left:714px;top:601px;width:1px;height:22px;background:#d8d8d8"></div>
<div class="a" style="left:796px;top:601px;width:1px;height:22px;background:#d8d8d8"></div>
<div class="a" style="left:876px;top:601px;width:1px;height:22px;background:#d8d8d8"></div>
<div class="a" style="left:956px;top:601px;width:1px;height:22px;background:#d8d8d8"></div>
<div class="a" style="left:1036px;top:601px;width:1px;height:22px;background:#d8d8d8"></div>
<div class="a" style="left:1156px;top:601px;width:1px;height:22px;background:#d8d8d8"></div>
<div class="a" style="left:42px;top:606px;color:#ff0000;font-size:11px">4</div>
<div class="a" style="left:69px;top:606px;color:#ff0000;font-size:11px">100101007</div>
<div class="a" style="left:153px;top:606px;color:#ff0000">键盘</div>
<div class="a" style="left:384px;top:606px;color:#ff0000">台</div>
<div class="a" style="left:433px;top:606px;color:#ff0000;font-size:11px">10</div>
<div class="a" style="left:640px;top:606px;color:#ff0000">办公设备</div>
<div class="a" style="left:717px;top:606px;color:#ff0000;font-size:11px">5</div>
<div class="a" style="left:879px;top:606px;color:#ff0000;font-size:11px">10</div>
<div class="a" style="left:959px;top:606px;color:#ff0000">商品</div>
<div class="a" style="left:1039px;top:606px;color:#ff0000">组装电脑</div>
<div class="a" style="left:17px;top:608px;width:0;height:0;border-top:4px solid transparent;border-bottom:4px solid transparent;border-left:4px solid #000"></div>
<div class="a" style="left:12px;top:646px;width:1145px;height:23px;background:linear-gradient(#f8f8f8,#ececec);border-top:1px solid #c8c8c8;border-right:1px solid #c8c8c8"></div>
<div class="a" style="left:12px;top:647px;width:14px;height:8px;background:#fff"></div>
<div class="a" style="left:452px;top:652px;font-size:11px">40</div>
<div class="a" style="left:16px;top:682px;">制单人</div>
<div class="a" style="left:81px;top:678px;width:84px;height:18px;background:#f0f0f0;border-bottom:1px solid #8a8a8a"></div>
<div class="a" style="left:83px;top:680px;color:#7a7a7a">系统管理员</div>
<div class="a" style="left:191px;top:682px;">制单日期</div>
<div class="a" style="left:256px;top:678px;width:103px;height:18px;background:#f0f0f0;border-bottom:1px solid #8a8a8a"></div>
<div class="a" style="left:258px;top:680px;color:#7a7a7a;font-family:'Liberation Mono',monospace;font-size:12px;letter-spacing:-0.4px">2020-07-01</div>
<div class="a" style="left:8px;top:718px;width:1246px;height:27px;background:linear-gradient(#d5d5d5 0,#e6e6e6 3px,#eeeeee 6px,#f0f0f0 100%)"></div>
<svg class="a" style="left:12px;top:725px" width="16" height="16"><rect width="16" height="16" rx="2" fill="#d41c1a"/><g transform="translate(-0.6,-0.5) scale(0.48)"><path d="M6.5 11 Q9 10.2 11.8 11 Q12.6 14.5 13.2 17.5 Q18 10 26.2 6.5 L26.8 12.5 Q19 15.5 15 21.5 Q13.2 25.5 16.5 27.5 Q12 28.5 9.5 26.5 Q7 21 6.5 11 Z" fill="#fff"/><path d="M6.3 25.2 Q10 33.5 18.5 32.8 Q28 31.5 30.8 16.4 Q25 21 20 23 Q17.5 24.3 19 25 Q23 23.5 25.5 21.5 Q22 29.5 16 30 Q10 30 6.3 25.2Z" fill="#fff"/></g></svg>
<div class="a" style="left:31px;top:727px;">应用中心：</div>
<div class="a" style="left:90px;top:727px;font-family:'Liberation Mono',monospace;font-size:12px;letter-spacing:-1.2px;color:#111">127.0.0.1:7099</div>
<div class="a" style="left:207px;top:724px;width:1px;height:18px;background:#c5c5c5;box-shadow:1px 0 0 #fff"></div>
<div class="a" style="left:330px;top:724px;width:1px;height:18px;background:#c5c5c5;box-shadow:1px 0 0 #fff"></div>
<div class="a" style="left:553px;top:724px;width:1px;height:18px;background:#c5c5c5;box-shadow:1px 0 0 #fff"></div>
<div class="a" style="left:736px;top:724px;width:1px;height:18px;background:#c5c5c5;box-shadow:1px 0 0 #fff"></div>
<div class="a" style="left:1052px;top:724px;width:1px;height:18px;background:#c5c5c5;box-shadow:1px 0 0 #fff"></div>
<div class="a" style="left:1231px;top:724px;width:1px;height:18px;background:#c5c5c5;box-shadow:1px 0 0 #fff"></div>
<svg class="a" style="left:216px;top:725px" width="15" height="15"><circle cx="7.5" cy="7.5" r="7" fill="#2aa83a" stroke="#157a22"/><path d="M4 7.5 l2.5 2.5 l4.5 -5" stroke="#fff" stroke-width="2" fill="none"/></svg>
<div class="a" style="left:233px;top:727px;">连接状态：正常</div>
<div class="a" style="left:344px;top:727px;">账套：演示账套(2019年第1期)</div>
<div class="a" style="left:568px;top:727px;">操作员：系统管理员(admin)</div>
<div class="a" style="left:750px;top:727px;">郑州亚拓软件科技有限公司 版权所有</div>
<svg class="a" style="left:1062px;top:726px" width="17" height="13"><rect x=".5" y=".5" width="16" height="12" fill="#eaf4fc" stroke="#6aa0d8"/><path d="M1 1 L8.5 7 L16 1" stroke="#6aa0d8" fill="none"/></svg>
<div class="a" style="left:1084px;top:727px;"><u>消息提醒中心</u></div>
<svg class="a" style="left:1244px;top:735px" width="10" height="10"><g fill="#a8b0b6"><rect x="6" y="0" width="1.5" height="1.5"/><rect x="3" y="3" width="1.5" height="1.5"/><rect x="6" y="3" width="1.5" height="1.5"/><rect x="0" y="6" width="1.5" height="1.5"/><rect x="3" y="6" width="1.5" height="1.5"/><rect x="6" y="6" width="1.5" height="1.5"/></g></svg>
</body></html>
